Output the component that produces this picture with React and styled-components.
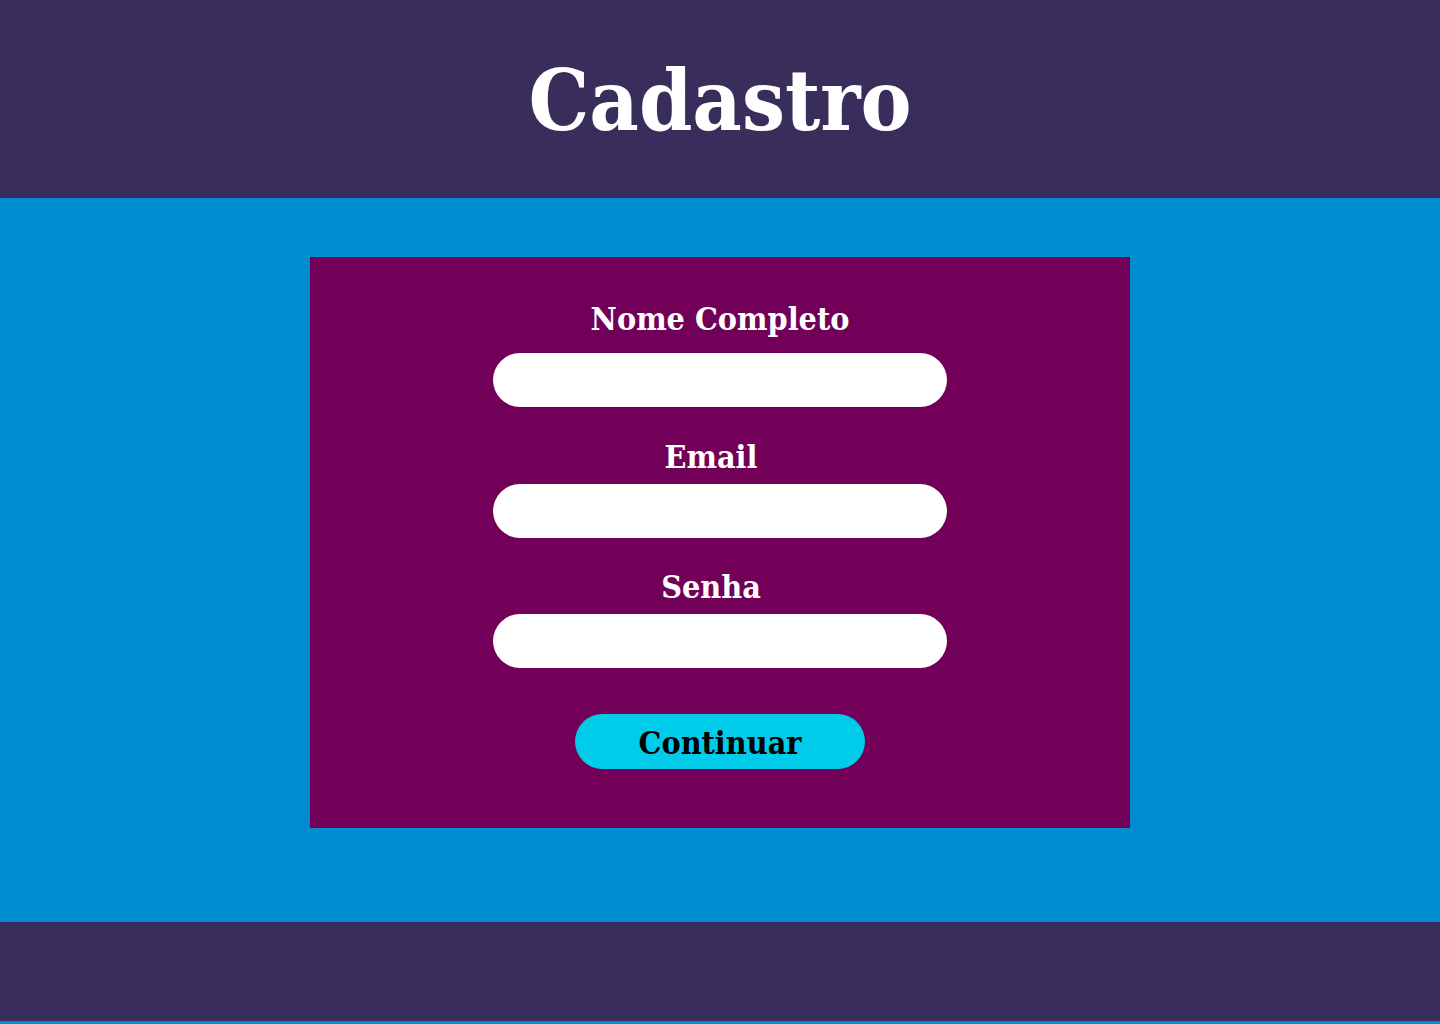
import React from 'react';
import styled, { createGlobalStyle } from 'styled-components';

const GlobalStyle = createGlobalStyle`
  html, body {
    margin: 0;
    padding: 0;
    background: #008ccf;
  }
  * {
    box-sizing: border-box;
  }
`;

const slab = `"DejaVu Serif Condensed", "DejaVu Serif", serif`;

const Header = styled.header`
  height: 198px;
  background: #392d5b;
  display: flex;
  align-items: center;
  justify-content: center;
`;

const Title = styled.h1`
  margin: 0;
  padding-top: 2px;
  font-family: ${slab};
  font-weight: bold;
  font-size: 85px;
  color: #fff;
`;

const Main = styled.main`
  height: 724px;
  background: #008ccf;
  padding-top: 59px;
  display: flex;
  justify-content: center;
  align-items: flex-start;
`;

const Card = styled.form`
  width: 820px;
  height: 571px;
  background: #720058;
  display: flex;
  flex-direction: column;
  align-items: center;
  padding-top: 40px;
`;

const Field = styled.div`
  display: flex;
  flex-direction: column;
  align-items: center;
  margin-bottom: ${props => props.last ? '46px' : '0'};
`;

const Label = styled.label`
  font-family: ${slab};
  font-weight: bold;
  font-size: 32px;
  color: #fff;
  line-height: 44px;
  margin-top: ${props => props.shift ? 7 : 0}px;
  margin-bottom: ${props => props.shift ? 5 : 12}px;
  padding-right: ${props => props.shift || 0}px;
`;

const Input = styled.input`
  width: 454px;
  height: 54px;
  border: none;
  border-radius: 27px;
  background: #fff;
  outline: none;
  margin-bottom: ${props => props.gap || 0}px;
`;

const Button = styled.button`
  width: 290px;
  height: 55px;
  border: none;
  border-radius: 28px;
  background: #00cbe9;
  color: #000;
  font-family: ${slab};
  font-weight: bold;
  font-size: 32px;
  padding-top: 3px;
  cursor: pointer;
`;

const Footer = styled.footer`
  height: 99px;
  background: #392d5b;
`;

const App = () => {
  return (
    <>
      <GlobalStyle />
      <Header>
        <Title>Cadastro</Title>
      </Header>
      <Main>
        <Card onSubmit={e => e.preventDefault()}>
          <Field>
            <Label>Nome Completo</Label>
            <Input type="text" gap={21} />
          </Field>
          <Field>
            <Label shift={18}>Email</Label>
            <Input type="email" gap={20} />
          </Field>
          <Field last>
            <Label shift={18}>Senha</Label>
            <Input type="password" />
          </Field>
          <Button type="submit">Continuar</Button>
        </Card>
      </Main>
      <Footer />
    </>
  );
};

export default App;
